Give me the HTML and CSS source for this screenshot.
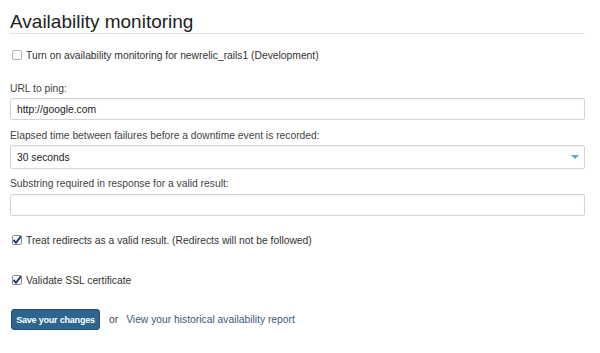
FILE: index.html
```html
<!DOCTYPE html>
<html lang="en">
<head>
    <meta charset="UTF-8">
    <meta name="viewport" content="width=device-width, initial-scale=1.0">
    <title>Availability monitoring</title>
    <link rel="stylesheet" href="styles.css">
</head>
<body>
    <h1>Availability monitoring</h1>

    <form class="settings">
        <label class="check-row first">
            <input type="checkbox" class="check">
            Turn on availability monitoring for newrelic_rails1 (Development)
        </label>

        <div class="form-group url">
            <label for="url">URL to ping:</label>
            <input type="text" id="url" value="http://google.com">
        </div>

        <div class="form-group">
            <label for="elapsed">Elapsed time between failures before a downtime event is recorded:</label>
            <div class="select-wrap">
                <select id="elapsed">
                    <option>30 seconds</option>
                    <option>1 minute</option>
                    <option>5 minutes</option>
                </select>
            </div>
        </div>

        <div class="form-group substring">
            <label for="substring">Substring required in response for a valid result:</label>
            <input type="text" id="substring">
        </div>

        <label class="check-row redirects">
            <input type="checkbox" class="check" checked>
            Treat redirects as a valid result. (Redirects will not be followed)
        </label>

        <label class="check-row ssl">
            <input type="checkbox" class="check" checked>
            Validate SSL certificate
        </label>

        <div class="actions">
            <button type="button">Save your changes</button>
            <span class="or">or</span>
            <a href="#">View your historical availability report</a>
        </div>
    </form>
</body>
</html>
```

FILE: styles.css
```css
body {
    font-family: "Liberation Sans", Arial, sans-serif;
    font-size: 10.3px;
    color: #333;
    margin: 0;
    padding: 0 15px 0 10px;
}
h1 {
    font-weight: normal;
    font-size: 19px;
    color: #222;
    margin: 12px 0 0;
    padding-bottom: 2px;
    line-height: 19px;
    border-bottom: 1px solid #e2e2e2;
}
.settings {
    display: flex;
    flex-direction: column;
}
.check-row {
    display: flex;
    align-items: center;
    gap: 4px;
    height: 14px;
    margin-left: 2px;
}
.check-row.first {
    margin-top: 14px;
}
.check {
    appearance: none;
    width: 10px;
    height: 10px;
    margin: 0;
    border: 1px solid #b5b5b5;
    border-radius: 2px;
    background: #fff;
}
.check:checked {
    background: #fff url("data:image/svg+xml,%3Csvg xmlns='http://www.w3.org/2000/svg' viewBox='0 0 10 10'%3E%3Cpath d='M1.5 5 L4 7.8 L9.5 0.5' fill='none' stroke='%23233a8c' stroke-width='2'/%3E%3C/svg%3E") no-repeat center / 10px 10px;
    border-color: #8a8a8a;
}
.form-group {
    margin-top: 9px;
    display: flex;
    flex-direction: column;
    gap: 2px;
}
.form-group.url {
    margin-top: 20px;
}
.form-group.substring {
    margin-top: 8px;
    gap: 3px;
}
.form-group label {
    color: #444;
    line-height: 14px;
}
input[type="text"], select {
    font-family: inherit;
    font-size: 10.3px;
    color: #222;
    height: 22px;
    padding: 0 6px;
    border: 1px solid #d4d4d4;
    border-radius: 2px;
    box-shadow: inset 0 1px 1px rgba(0, 0, 0, 0.04);
    background: #fff;
    box-sizing: border-box;
    width: 100%;
}
select {
    appearance: none;
    height: 24px;
}
.select-wrap {
    position: relative;
}
.select-wrap::after {
    content: "";
    position: absolute;
    right: 6px;
    top: 10px;
    border-left: 4px solid transparent;
    border-right: 4px solid transparent;
    border-top: 4px solid #57a7c0;
}
.check-row.redirects {
    margin-top: 17px;
}
.check-row.ssl {
    margin-top: 26px;
}
.actions {
    display: flex;
    align-items: center;
    margin-top: 22px;
}
button {
    background-color: #2c6590;
    color: #fff;
    border: 1px solid #1f4f73;
    border-radius: 3px;
    font-family: inherit;
    font-size: 9px;
    letter-spacing: -0.2px;
    font-weight: bold;
    width: 89px;
    height: 21px;
    padding: 0;
    margin-left: 1px;
}
.or {
    color: #444;
    margin: 0 8px 0 9px;
}
a {
    color: #3b5a7d;
    text-decoration: none;
}
```
